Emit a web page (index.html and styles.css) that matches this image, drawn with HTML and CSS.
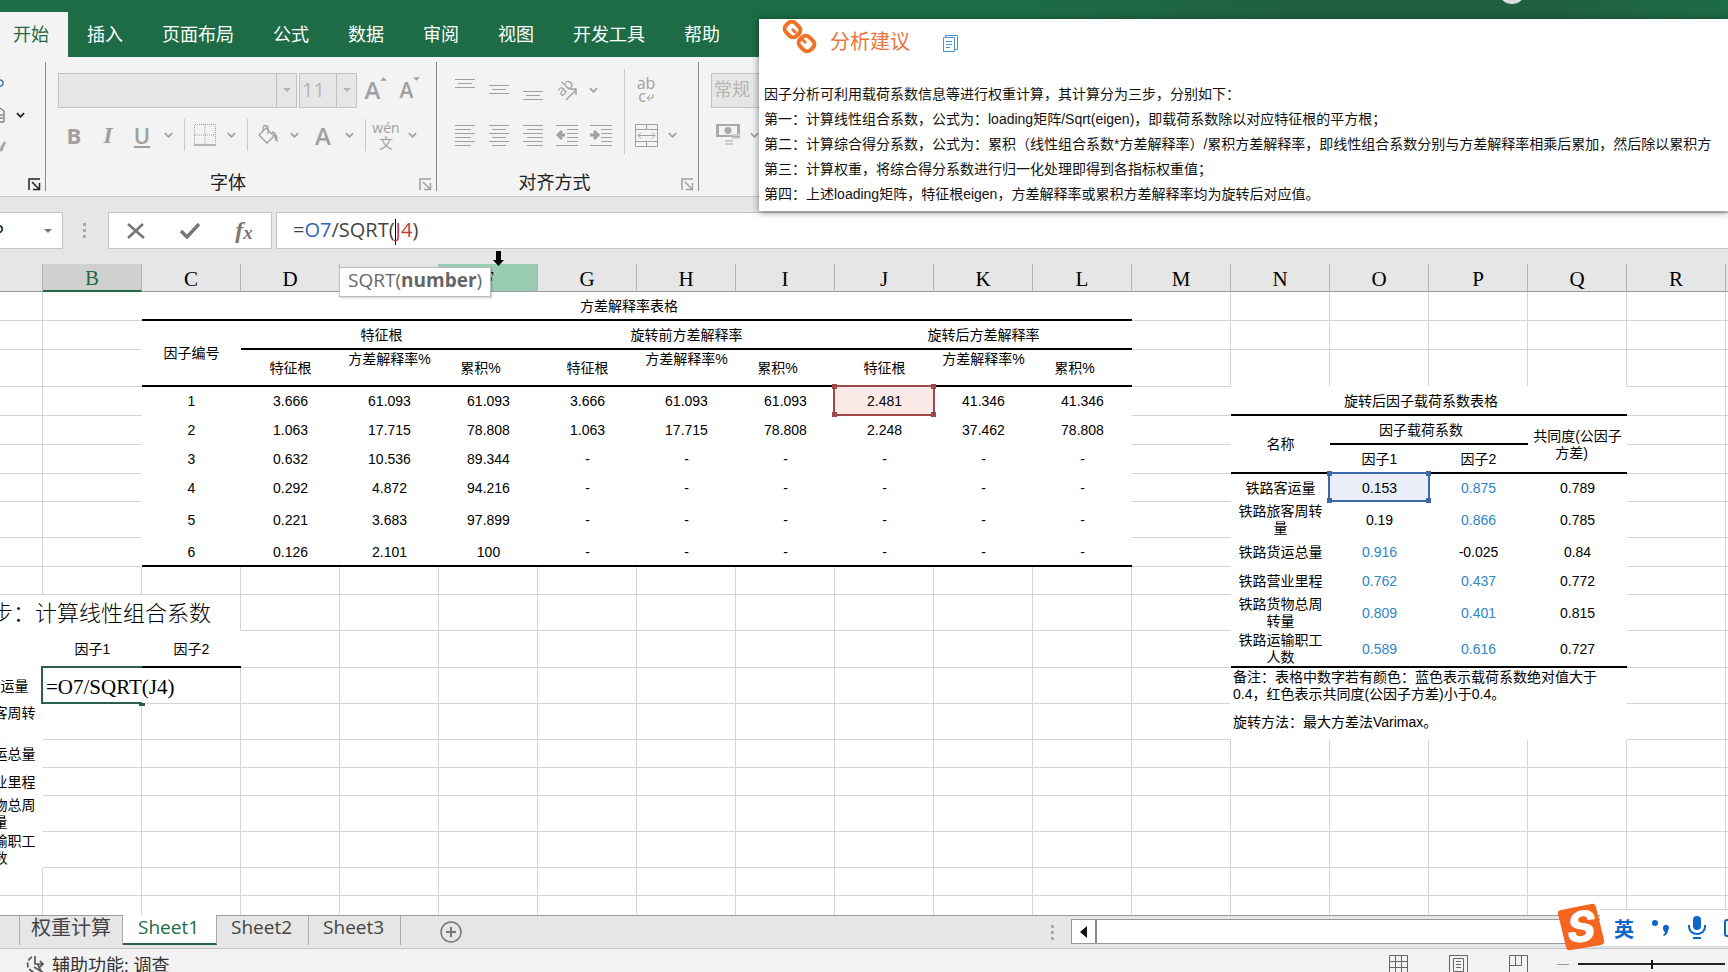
FILE: index.html
```html
<!DOCTYPE html>
<html lang="zh-CN">
<head>
  <meta charset="UTF-8" />
  <meta name="viewport" content="width=device-width, initial-scale=1.0" />
  <title>Sheet1</title>
  <link rel="stylesheet" href="styles.css">
</head>
<body>

  <svg class="defs" aria-hidden="true">
    <symbol id="chev" viewBox="0 0 10 6"><path d="M1 1l4 4 4-4" fill="none" stroke="currentColor" stroke-width="2"/></symbol>
    <symbol id="launch" viewBox="0 0 13 13"><path d="M1 12V1h11M4 4l7 7M11.500 5v6.500H5" fill="none" stroke="currentColor" stroke-width="1.500"/></symbol>
    <symbol id="down" viewBox="0 0 8 4"><path d="M0 0h8L4 4z" fill="currentColor"/></symbol>
  </svg>

  <header class="titlebar">
    <span class="avatar"></span>
    <nav class="tabs">
      <button class="active">开始</button>
      <button>插入</button>
      <button>页面布局</button>
      <button>公式</button>
      <button>数据</button>
      <button>审阅</button>
      <button>视图</button>
      <button>开发工具</button>
      <button>帮助</button>
    </nav>
  </header>

  <section class="ribbon">
    <div class="group clipboard">
      <div class="clip-icons">
        <svg width="6" height="12" viewBox="0 0 6 12"><circle cx="0" cy="6" r="3" fill="none" stroke="#4a78b0" stroke-width="1.500"/></svg>
        <div class="clip-row">
          <svg width="6" height="16" viewBox="0 0 6 16"><path d="M0 1l4 3v11H0M0 8h3M0 11h3" fill="none" stroke="#555"/></svg>
          <button class="chev dark" aria-label="复制选项"><svg width="9" height="6"><use href="#chev"/></svg></button>
        </div>
        <svg width="6" height="14" viewBox="0 0 6 14"><path d="M0 10l5-9M0 7l3 2" stroke="#aaa" stroke-width="3"/></svg>
      </div>
      <button class="launcher dark" aria-label="剪贴板设置"><svg width="13" height="13"><use href="#launch"/></svg></button>
    </div>

    <div class="group font">
      <div class="row top">
        <label class="combo font-name"><select disabled aria-label="字体名称"><option></option></select><span><svg width="8" height="4"><use href="#down"/></svg></span></label>
        <label class="combo font-size"><select disabled aria-label="字号"><option>11</option></select><span><svg width="8" height="4"><use href="#down"/></svg></span></label>
        <button class="tool grow" aria-label="增大字号">A<svg width="7" height="4" viewBox="0 0 8 4"><path d="M0 4h8L4 0z" fill="currentColor"/></svg></button>
        <button class="tool shrink" aria-label="减小字号">A<svg width="7" height="4" viewBox="0 0 8 4"><path d="M0 0h8L4 4z" fill="currentColor"/></svg></button>
      </div>
      <div class="row">
        <button class="tool bold">B</button>
        <button class="tool italic">I</button>
        <button class="tool under">U</button>
        <button class="chev" aria-label="下划线选项"><svg width="9" height="6"><use href="#chev"/></svg></button>
        <i class="sep"></i>
        <button class="tool" aria-label="边框"><svg width="22" height="22" viewBox="0 0 22 22" fill="none" stroke="currentColor"><path d="M.5 20V.5h21V20M11 1v19M1 11h20" stroke-dasharray="1 1"/><path d="M0 21h22" stroke-width="1.500"/></svg></button>
        <button class="chev" aria-label="边框选项"><svg width="9" height="6"><use href="#chev"/></svg></button>
        <i class="sep"></i>
        <button class="tool" aria-label="填充颜色"><svg width="20" height="20" viewBox="0 0 20 20" fill="none" stroke="currentColor" stroke-width="1.300"><path d="M8 3l8 8-7 7-8-8zM5 6V3a2 2 0 0 1 5 0v6"/><path d="M14 7c4 1 5 4 5 9-2-1-2-4-2-6" fill="currentColor"/></svg></button>
        <button class="chev" aria-label="填充选项"><svg width="9" height="6"><use href="#chev"/></svg></button>
        <button class="tool color">A</button>
        <button class="chev" aria-label="字体颜色选项"><svg width="9" height="6"><use href="#chev"/></svg></button>
        <i class="sep"></i>
        <button class="tool pinyin"><span>wén</span><span>文</span></button>
        <button class="chev" aria-label="拼音选项"><svg width="9" height="6"><use href="#chev"/></svg></button>
      </div>
      <p class="caption">字体</p>
      <button class="launcher" aria-label="字体设置"><svg width="13" height="13"><use href="#launch"/></svg></button>
    </div>

    <div class="group align">
      <div class="split">
        <div>
          <div class="row top">
            <button class="tool" aria-label="顶端对齐"><svg width="20" height="22" viewBox="0 0 20 22" stroke="currentColor"><path d="M0 .5h20M3 4.500h14M0 8.500h20"/></svg></button>
            <button class="tool" aria-label="垂直居中"><svg width="20" height="22" viewBox="0 0 20 22" stroke="currentColor"><path d="M0 6.500h20M3 10.500h14M0 14.500h20"/></svg></button>
            <button class="tool" aria-label="底端对齐"><svg width="20" height="22" viewBox="0 0 20 22" stroke="currentColor"><path d="M0 12.500h20M3 16.500h14M0 20.500h20"/></svg></button>
            <button class="tool orient" aria-label="方向"><svg width="22" height="22" viewBox="0 0 22 22"><text transform="translate(6 18) rotate(-45)" font-size="15" fill="currentColor">ab</text><path d="M10 21L20 11M14 10h6v6" fill="none" stroke="currentColor" stroke-width="1.500"/></svg></button>
            <button class="chev" aria-label="方向选项"><svg width="9" height="6"><use href="#chev"/></svg></button>
          </div>
          <div class="row">
            <button class="tool" aria-label="左对齐"><svg width="20" height="22" viewBox="0 0 20 22" stroke="currentColor"><path d="M0 1.500h20M0 5.500h16M0 9.500h20M0 13.500h16M0 17.500h20M0 21.500h16"/></svg></button>
            <button class="tool" aria-label="居中"><svg width="20" height="22" viewBox="0 0 20 22" stroke="currentColor"><path d="M0 1.500h20M3 5.500h14M0 9.500h20M3 13.500h14M0 17.500h20M3 21.500h14"/></svg></button>
            <button class="tool" aria-label="右对齐"><svg width="20" height="22" viewBox="0 0 20 22" stroke="currentColor"><path d="M0 1.500h20M4 5.500h16M0 9.500h20M4 13.500h16M0 17.500h20M4 21.500h16"/></svg></button>
            <button class="tool" aria-label="减少缩进"><svg width="22" height="22" viewBox="0 0 22 22" stroke="currentColor"><path d="M0 1.500h22M11 5.500h11M11 9.500h11M11 13.500h11M11 17.500h11M0 21.500h22"/><path d="M9 11H2M6 7l-4 4 4 4" fill="none" stroke-width="3"/></svg></button>
            <button class="tool" aria-label="增加缩进"><svg width="22" height="22" viewBox="0 0 22 22" stroke="currentColor"><path d="M0 1.500h22M11 5.500h11M11 9.500h11M11 13.500h11M11 17.500h11M0 21.500h22"/><path d="M0 11h7M4 7l4 4-4 4" fill="none" stroke-width="3"/></svg></button>
          </div>
        </div>
        <i class="sep tall"></i>
        <div>
          <div class="row top">
            <button class="tool wrap"><span>ab</span><span>c<svg width="8" height="8" viewBox="0 0 8 8"><path d="M7 0v4H1M4 1L1 4l3 3" fill="none" stroke="currentColor"/></svg></span></button>
          </div>
          <div class="row">
            <button class="tool" aria-label="合并后居中"><svg width="23" height="23" viewBox="0 0 23 23" fill="none" stroke="currentColor"><path d="M.5.5h22v22H.5zM.5 5.500h22M.5 17.500h22M11.500.5v5M11.500 17.500v5M3 11.500h17M6 8.500l-3 3 3 3M17 8.500l3 3-3 3"/></svg></button>
            <button class="chev" aria-label="合并选项"><svg width="9" height="6"><use href="#chev"/></svg></button>
          </div>
        </div>
      </div>
      <p class="caption">对齐方式</p>
      <button class="launcher" aria-label="对齐设置"><svg width="13" height="13"><use href="#launch"/></svg></button>
    </div>

    <div class="group number">
      <div class="row top">
        <label class="combo"><select disabled aria-label="数字格式"><option>常规</option></select></label>
      </div>
      <div class="row">
        <button class="tool" aria-label="会计数字格式"><svg width="24" height="24" viewBox="0 0 24 24"><path d="M0 1h24v13H0z" fill="#aaa"/><path d="M3 3h18v9H3z" fill="#f3f3f3"/><circle cx="12" cy="7.500" r="3.500" fill="#aaa"/><path d="M16 12h8M16 15h8M9 18h8M9 21h8" stroke="#ccc" stroke-width="2"/></svg></button>
        <button class="chev" aria-label="会计格式选项"><svg width="9" height="6"><use href="#chev"/></svg></button>
      </div>
    </div>
  </section>

  <section class="formula-bar">
    <div class="name-box">
      <input type="text" value="P" aria-label="名称框">
      <button aria-label="名称列表"><svg width="8" height="4"><use href="#down"/></svg></button>
    </div>
    <i class="dots"></i>
    <div class="fx-buttons">
      <button aria-label="取消"><svg width="18" height="16" viewBox="0 0 18 16"><path d="M1 1l16 14M16 1L1 15" stroke="#777" stroke-width="2.500"/></svg></button>
      <button aria-label="输入"><svg width="20" height="16" viewBox="0 0 20 16"><path d="M1 8l6 6L19 1" fill="none" stroke="#777" stroke-width="3.500"/></svg></button>
      <button class="fx"><em>f</em><em>x</em></button>
    </div>
    <div class="formula" contenteditable="true" role="textbox" aria-label="编辑栏">=<span class="blue">O7</span>/SQRT(<i class="caret"></i><span class="red">J4</span>)</div>
  </section>

  <main class="sheet">
    <table>
      <colgroup><col span="19"></colgroup>
      <thead>
        <tr>
          <th></th><th class="current">B</th><th>C</th><th>D</th><th>E</th><th class="hot">F</th><th>G</th><th>H</th><th>I</th><th>J</th><th>K</th><th>L</th><th>M</th><th>N</th><th>O</th><th>P</th><th>Q</th><th>R</th><th></th>
        </tr>
      </thead>
      <tbody>
        <tr class="h29">
          <td colspan="2" class="edge"></td>
          <td colspan="10" class="fill thick shift">方差解释率表格</td>
          <td colspan="7"></td>
        </tr>
        <tr class="h29">
          <td colspan="2" class="edge"></td>
          <td rowspan="2" class="fill thick">因子编号</td>
          <td colspan="3" class="fill thick shift">特征根</td>
          <td colspan="3" class="fill thick">旋转前方差解释率</td>
          <td colspan="3" class="fill thick">旋转后方差解释率</td>
          <td colspan="7"></td>
        </tr>
        <tr class="h37">
          <td colspan="2" class="edge"></td>
          <td class="fill thick">特征根</td><td class="fill thick up">方差解释率%</td><td class="fill thick shift">累积%</td>
          <td class="fill thick">特征根</td><td class="fill thick up">方差解释率%</td><td class="fill thick shift">累积%</td>
          <td class="fill thick">特征根</td><td class="fill thick up">方差解释率%</td><td class="fill thick shift">累积%</td>
          <td></td><td colspan="4" class="open"></td><td colspan="2"></td>
        </tr>
        <tr class="h29">
          <td colspan="2" class="edge"></td>
          <td class="fill">1</td>
          <td class="fill">3.666</td><td class="fill">61.093</td><td class="fill">61.093</td>
          <td class="fill">3.666</td><td class="fill">61.093</td><td class="fill">61.093</td>
          <td class="fill ref red-ref">2.481<span class="frame"></span></td><td class="fill">41.346</td><td class="fill">41.346</td>
          <td class="edge"></td>
          <td colspan="4" class="fill thick shift">旋转后因子载荷系数表格</td>
          <td colspan="2"></td>
        </tr>
        <tr class="h29">
          <td colspan="2" class="edge"></td>
          <td class="fill">2</td>
          <td class="fill">1.063</td><td class="fill">17.715</td><td class="fill">78.808</td>
          <td class="fill">1.063</td><td class="fill">17.715</td><td class="fill">78.808</td>
          <td class="fill">2.248</td><td class="fill">37.462</td><td class="fill">78.808</td>
          <td class="edge"></td>
          <td rowspan="2" class="fill thick">名称</td>
          <td colspan="2" class="fill thick shift">因子载荷系数</td>
          <td rowspan="2" class="fill thick">共同度(公因子<br>方差)&nbsp;&nbsp;&nbsp;</td>
          <td colspan="2"></td>
        </tr>
        <tr class="h29">
          <td colspan="2" class="edge"></td>
          <td class="fill">3</td>
          <td class="fill">0.632</td><td class="fill">10.536</td><td class="fill">89.344</td>
          <td class="fill">-</td><td class="fill">-</td><td class="fill">-</td>
          <td class="fill">-</td><td class="fill">-</td><td class="fill">-</td>
          <td class="edge"></td>
          <td class="fill thick">因子1</td><td class="fill thick">因子2</td>
          <td colspan="2"></td>
        </tr>
        <tr class="h28">
          <td colspan="2" class="edge"></td>
          <td class="fill">4</td>
          <td class="fill">0.292</td><td class="fill">4.872</td><td class="fill">94.216</td>
          <td class="fill">-</td><td class="fill">-</td><td class="fill">-</td>
          <td class="fill">-</td><td class="fill">-</td><td class="fill">-</td>
          <td class="edge"></td>
          <td class="fill">铁路客运量</td>
          <td class="fill ref blue-ref">0.153<span class="frame"></span></td><td class="fill hi">0.875</td><td class="fill">0.789</td>
          <td colspan="2"></td>
        </tr>
        <tr class="h36">
          <td colspan="2" class="edge"></td>
          <td class="fill">5</td>
          <td class="fill">0.221</td><td class="fill">3.683</td><td class="fill">97.899</td>
          <td class="fill">-</td><td class="fill">-</td><td class="fill">-</td>
          <td class="fill">-</td><td class="fill">-</td><td class="fill">-</td>
          <td class="edge"></td>
          <td class="fill">铁路旅客周转量</td>
          <td class="fill">0.19</td><td class="fill hi">0.866</td><td class="fill">0.785</td>
          <td colspan="2"></td>
        </tr>
        <tr class="h29">
          <td colspan="2" class="edge"></td>
          <td class="fill thick">6</td>
          <td class="fill thick">0.126</td><td class="fill thick">2.101</td><td class="fill thick">100</td>
          <td class="fill thick">-</td><td class="fill thick">-</td><td class="fill thick">-</td>
          <td class="fill thick">-</td><td class="fill thick">-</td><td class="fill thick">-</td>
          <td class="edge"></td>
          <td class="fill">铁路货运总量</td>
          <td class="fill hi">0.916</td><td class="fill">-0.025</td><td class="fill">0.84</td>
          <td colspan="2"></td>
        </tr>
        <tr class="h28">
          <td colspan="12"></td>
          <td class="edge"></td>
          <td class="fill">铁路营业里程</td>
          <td class="fill hi">0.762</td><td class="fill hi">0.437</td><td class="fill">0.772</td>
          <td colspan="2"></td>
        </tr>
        <tr class="h36">
          <td colspan="3" class="fill step">第一步：计算线性组合系数</td>
          <td colspan="9"></td>
          <td class="edge"></td>
          <td class="fill">铁路货物总周转量</td>
          <td class="fill hi">0.809</td><td class="fill hi">0.401</td><td class="fill">0.815</td>
          <td colspan="2"></td>
        </tr>
        <tr class="h37">
          <td class="fill"></td>
          <td class="fill thick">因子1</td><td class="fill thick">因子2</td>
          <td colspan="9"></td>
          <td class="edge"></td>
          <td class="fill thick">铁路运输职工人数</td>
          <td class="fill thick hi">0.589</td><td class="fill thick hi">0.616</td><td class="fill thick">0.727</td>
          <td colspan="2"></td>
        </tr>
        <tr class="h36">
          <td class="fill">铁路客运量</td>
          <td class="editing"><input type="text" value="=O7/SQRT(J4)" aria-label="B13"></td>
          <td></td>
          <td colspan="9"></td>
          <td class="edge"></td>
          <td colspan="4" class="fill note">备注：表格中数字若有颜色：蓝色表示载荷系数绝对值大于0.4，红色表示共同度(公因子方差)小于0.4。</td>
          <td colspan="2"></td>
        </tr>
        <tr class="h36">
          <td class="fill">铁路旅客周转量</td>
          <td colspan="11"></td>
          <td class="edge"></td>
          <td colspan="4" class="fill note">旋转方法：最大方差法Varimax。</td>
          <td colspan="2"></td>
        </tr>
        <tr class="h28"><td class="fill">铁路货运总量</td><td colspan="18"></td></tr>
        <tr class="h28"><td class="fill">铁路营业里程</td><td colspan="18"></td></tr>
        <tr class="h36"><td class="fill">铁路货物总周转量</td><td colspan="18"></td></tr>
        <tr class="h36"><td class="fill">铁路运输职工人数</td><td colspan="18"></td></tr>
        <tr class="h28"><td colspan="19"></td></tr>
        <tr class="h28"><td colspan="19"></td></tr>
      </tbody>
    </table>
  </main>

  <footer>
    <div class="sheet-bar">
      <nav class="sheet-tabs">
        <button>权重计算</button>
        <button class="active">Sheet1</button>
        <button>Sheet2</button>
        <button>Sheet3</button>
      </nav>
      <button class="add" aria-label="新工作表"><svg width="22" height="22" viewBox="0 0 22 22" fill="none" stroke="#777"><circle cx="11" cy="11" r="10" stroke-width="1.500"/><path d="M6 11h10M11 6v10" stroke-width="2"/></svg></button>
      <i class="dots"></i>
      <div class="scroll">
        <button aria-label="向左滚动"><svg width="7" height="12" viewBox="0 0 7 12"><path d="M7 0v12L0 6z" fill="#111"/></svg></button>
      </div>
    </div>
    <div class="status">
      <button class="access">
        <svg width="20" height="20" viewBox="0 0 20 20" fill="none" stroke="#555" stroke-width="1.700"><path d="M6 2a8 8 0 0 0 2 15" stroke-dasharray="5 2"/><path d="M9 1v8h8M14 6l3 3-3 3M8 12l10 6M12 10l4 8"/></svg>
        辅助功能: 调查
      </button>
      <div class="views">
        <button aria-label="普通"><svg width="19" height="19" viewBox="0 0 19 19" fill="none" stroke="#666"><path d="M.5.5h18v18H.5zM6.500.5v18M12.500.5v18M.5 6.500h18M.5 12.500h18"/></svg></button>
        <button aria-label="页面布局"><svg width="19" height="19" viewBox="0 0 19 19" fill="none" stroke="#666"><path d="M.5.5h18v18H.5zM4.500 3.500h10v13h-10zM7 6.500h5M7 9.500h5M7 12.500h5"/></svg></button>
        <button aria-label="分页预览"><svg width="19" height="19" viewBox="0 0 19 19" fill="none" stroke="#666"><path d="M.5.5h18v18H.5zM6.500.5v10M12.500.5v10M.5 10.500h12"/></svg></button>
        <button class="minus" aria-label="缩小"></button>
        <input type="range" min="0" max="100" value="50" aria-label="缩放">
      </div>
    </div>
  </footer>

  <div class="fn-tip">SQRT(<b>number</b>)</div>

  <svg class="pointer" width="11" height="15" viewBox="0 0 11 15"><path d="M3 0h5v9h3l-5.500 6L0 9h3z"/></svg>

  <aside class="advice">
    <h2>
      <svg width="35" height="35" viewBox="0 0 35 35" fill="none" stroke="#f07025" stroke-width="4"><rect x="3" y="4" width="15" height="13" rx="5" transform="rotate(45 10.500 10.500)"/><rect x="17" y="18" width="15" height="13" rx="5" transform="rotate(45 24.500 24.500)"/><path d="M10 10l4 4M20 20l4 4" stroke-width="3"/></svg>
      分析建议
      <svg class="copy" width="15" height="17" viewBox="0 0 15 17" fill="none" stroke="#4a92dc"><path d="M.5 2.500h11v14H.5zM2.500 2.500v-2h12v14h-3M3 6.500h6M3 9.500h6M3 12.500h4"/></svg>
    </h2>
    <p>因子分析可利用载荷系数信息等进行权重计算，其计算分为三步，分别如下：</p>
    <p>第一：计算线性组合系数，公式为：loading矩阵/Sqrt(eigen)，即载荷系数除以对应特征根的平方根；</p>
    <p>第二：计算综合得分系数，公式为：累积（线性组合系数*方差解释率）/累积方差解释率，即线性组合系数分别与方差解释率相乘后累加，然后除以累积方</p>
    <p>第三：计算权重，将综合得分系数进行归一化处理即得到各指标权重值；</p>
    <p>第四：上述loading矩阵，特征根eigen，方差解释率或累积方差解释率均为旋转后对应值。</p>
  </aside>

  <div class="ime">
    <svg class="logo" width="48" height="48" viewBox="0 0 48 48"><path d="M1 11Q0 8 4 7L34 1q4-1 5 3l8 33q1 4-3 5L14 47q-4 1-5-3z" fill="#f4651f"/><text x="24" y="39" text-anchor="middle" transform="rotate(-4 24 24)" font-family="Inter" font-size="43" font-weight="800" font-style="italic" fill="#fff">S</text></svg>
    <button>英</button>
    <button aria-label="标点"><svg width="18" height="18" viewBox="0 0 18 18" fill="#0b66c8"><circle cx="3" cy="4" r="3"/><path d="M11 9a3 3 0 1 1 5 2q0 4-4 6l-1-1q2-1 2-3-2-1-2-4z"/></svg></button>
    <button aria-label="语音"><svg width="18" height="24" viewBox="0 0 18 24"><rect x="5" y="0" width="8" height="14" rx="4" fill="#0b66c8"/><path d="M1 9v2a8 7 0 0 0 16 0V9M5 22h8" fill="none" stroke="#0b66c8" stroke-width="2"/></svg></button>
    <button aria-label="键盘"><svg width="22" height="18" viewBox="0 0 22 18" fill="none" stroke="#0b66c8" stroke-width="2"><rect x="1" y="1" width="20" height="16" rx="2"/><path d="M4 5h14M4 9h14M4 13h14"/></svg></button>
  </div>

</body>
</html>
```
FILE: styles.css
```css
* {
  box-sizing: border-box;
}

body {
  margin: 0;
  height: 100vh;
  display: flex;
  flex-direction: column;
  overflow: hidden;
  position: relative;
  background: #e6e6e6;
  color: #111;
  font-family: "Open Sans", "Noto Sans CJK SC", sans-serif;
  font-size: 18px;
}

button, input, select {
  font: inherit;
  color: inherit;
  border: 0;
  padding: 0;
  background: none;
}

button {
  display: flex;
  align-items: center;
  justify-content: center;
}

p {
  margin: 0;
}

.defs {
  display: none;
}

/* title bar and tabs */

.titlebar {
  flex: none;
  height: 57px;
  padding-top: 12px;
  position: relative;
  overflow: hidden;
  background: linear-gradient(to right, #1d6c46 60%, #1f5f42 75%, #1f5f42 90%, #1d6c46);
}

.avatar {
  position: absolute;
  top: -24px;
  left: 87%;
  width: 28px;
  height: 28px;
  margin-left: -5px;
  border-radius: 50%;
  background: #ddd;
}

.tabs {
  display: flex;
  height: 100%;
  color: #fff;
}

.tabs button {
  padding: 0 20px 4px 19px;
}

.tabs .active {
  padding-left: 13px;
  padding-right: 19px;
  background: #f3f3f3;
  color: #1e6b45;
}

/* ribbon */

.ribbon {
  flex: none;
  display: flex;
  height: 140px;
  padding-top: 5px;
  background: #f3f3f3;
  border-bottom: 1px solid #c8c8c8;
}

.group {
  position: relative;
  height: 129px;
  padding: 7px 0 0 11px;
  border-right: 1px solid #8a8a8a;
  color: #a0a0a0;
}

.clipboard {
  width: 46px;
  padding-left: 0;
}

.clip-icons {
  display: flex;
  flex-direction: column;
  gap: 12px;
  padding-top: 8px;
}

.clip-row {
  display: flex;
  align-items: center;
  gap: 5px;
}

.clip-row .chev {
  height: 28px;
}

.font {
  width: 391px;
}

.align {
  width: 262px;
}

.number {
  flex: 1;
  border-right: 0;
  padding-left: 12px;
}

.row {
  display: flex;
  align-items: center;
  height: 38px;
  margin-top: 8px;
}

.row.top {
  height: 36px;
  margin-top: 3px;
}

.tool {
  width: 34px;
  height: 34px;
  flex: none;
}

.chev {
  width: 18px;
  height: 30px;
  flex: none;
}

.dark {
  color: #222;
}

.sep {
  width: 1px;
  height: 32px;
  margin: 0 3px 0 7px;
  background: #c9c9c9;
}

.sep.tall {
  height: 85px;
  margin: 0 4px 0 6px;
}

.split {
  display: flex;
}

.caption {
  position: absolute;
  left: 0;
  right: 26px;
  bottom: -4px;
  text-align: center;
  color: #222;
  line-height: 26px;
}

.launcher {
  position: absolute;
  right: 4px;
  bottom: 0;
}

.combo {
  display: flex;
  height: 35px;
  border: 1px solid #c2c2c2;
  background: #e6e6e6;
  color: #b5b5b5;
}

.combo select {
  flex: 1;
  min-width: 0;
  padding-left: 2px;
  padding-bottom: 2px;
  appearance: none;
  opacity: 1;
}

.combo span {
  display: flex;
  align-items: center;
  justify-content: center;
  width: 20px;
  border-left: 1px solid #c2c2c2;
}

.font-name {
  width: 239px;
  margin: 0 2px 0 1px;
}

.font-size {
  width: 58px;
  margin-right: 2px;
  font-size: 20px;
}

.number .combo {
  width: 120px;
}

.orient svg {
  overflow: visible;
}

.grow, .shrink {
  align-items: flex-start;
  font-size: 24px;
  font-weight: 600;
  line-height: 34px;
}

.grow svg, .shrink svg {
  margin-top: 4px;
}

.shrink {
  font-size: 21px;
}

.bold {
  font-size: 22px;
  font-weight: 700;
}

.italic {
  font-family: "Liberation Serif", serif;
  font-size: 24px;
  font-style: italic;
  font-weight: 700;
}

.under {
  font-size: 22px;
  font-weight: 600;
  text-decoration: underline;
}

.color {
  font-size: 24px;
  font-weight: 600;
  margin-left: 3px;
}

.pinyin, .wrap {
  flex-direction: column;
  font-size: 14px;
  line-height: 15px;
}

.wrap {
  font-size: 16px;
  line-height: 13px;
}

/* formula bar */

.formula-bar {
  flex: none;
  display: flex;
  height: 67px;
  padding: 15px 0;
}

.name-box, .fx-buttons, .formula {
  border: 1px solid #c4c4c4;
  background: #fff;
}

.name-box {
  display: flex;
  width: 63px;
  border-left: 0;
}

.name-box input {
  width: 34px;
  text-indent: -7px;
}

.name-box button {
  width: 28px;
  color: #777;
}

.dots {
  width: 3px;
  height: 16px;
  background: repeating-linear-gradient(#aaa 0 3px, transparent 3px 6px);
}

.formula-bar .dots {
  margin: 11px 22px 0 20px;
}

.fx-buttons {
  display: flex;
  width: 164px;
  margin-right: 4px;
}

.fx-buttons button {
  flex: 1;
}

.fx {
  font-family: "Liberation Serif", serif;
  font-size: 24px;
  font-weight: 700;
  color: #777;
}

.fx em + em {
  font-size: 19px;
  padding-top: 5px;
}

.formula {
  flex: 1;
  padding-left: 16px;
  border-right: 0;
  font-size: 20px;
  line-height: 34px;
  color: #444;
  outline: 0;
}

.caret {
  display: inline-block;
  width: 1px;
  height: 26px;
  vertical-align: middle;
  background: #000;
}

.blue {
  color: #2f66b5;
}

.red {
  color: #b84040;
}

/* worksheet */

.sheet {
  flex: 1;
  min-height: 0;
  overflow: hidden;
  background: #fff;
}

/* column A is scrolled partly out of view */
table {
  width: 1881px;
  margin-left: -56px;
  table-layout: fixed;
  border-spacing: 0;
  background: repeating-linear-gradient(to right, #fff 0 98px, #d4d4d4 98px 99px);
  font-family: "Liberation Sans", "Noto Sans CJK SC", sans-serif;
  font-size: 14px;
  line-height: 17px;
  color: #000;
}

col {
  width: 99px;
}

th {
  height: 28px;
  padding: 3px 0 0;
  background: #e6e6e6;
  border-right: 1px solid #b4b4b4;
  border-bottom: 1px solid #9a9a9a;
  font-family: "Liberation Serif", serif;
  font-size: 21px;
  font-weight: 400;
  line-height: 24px;
}

th.current {
  padding-top: 2px;
  background: #d0d0d0;
  border-bottom: 2px solid #1e6b45;
  color: #1e6b45;
}

th.hot {
  background: #9accb4;
}

td {
  padding: 1px 4px 0;
  border-bottom: 1px solid #d4d4d4;
  text-align: center;
}

.h28 { height: 28px; }
.h29 { height: 29px; }
.h36 { height: 36px; }
.h37 { height: 37px; }

.edge {
  border-right: 1px solid #fff;
}

.open {
  border-bottom-color: #fff;
}

.fill {
  background: #fff;
  border-bottom-color: #fff;
}

.thick {
  border-bottom: 2px solid #000;
}

.shift {
  padding-right: 20px;
}

.up {
  vertical-align: top;
}

.hi {
  color: #2e86c8;
}

.step {
  padding: 2px 0 0 3px;
  border-right: 1px solid #d4d4d4;
  font-size: 22px;
  font-weight: 300;
  line-height: 30px;
  text-align: left;
  white-space: nowrap;
}

.note {
  padding: 1px 24px 0 2px;
  text-align: left;
}

.ref {
  position: relative;
}

/* coloured box with four corner handles */
.frame {
  position: absolute;
  inset: -3px -2px -2px -3px;
  background:
    linear-gradient(currentColor, currentColor) 0 0 / 5px 5px,
    linear-gradient(currentColor, currentColor) 100% 0 / 5px 5px,
    linear-gradient(currentColor, currentColor) 0 100% / 5px 5px,
    linear-gradient(currentColor, currentColor) 100% 100% / 5px 5px;
  background-repeat: no-repeat;
}

.frame::before {
  content: "";
  position: absolute;
  inset: 1px;
  border: 2px solid currentColor;
}

.red-ref {
  background: #fbe9e8;
}

.red-ref .frame {
  color: #a04848;
}

.blue-ref {
  background: #e9eef8;
}

.blue-ref .frame {
  color: #3c68a8;
}

.editing {
  position: relative;
}

.editing::before {
  content: "";
  position: absolute;
  inset: -2px 0 -1px -2px;
  border: 2px solid #2b6149;
  border-right: 0;
}

.editing::after {
  content: "";
  position: absolute;
  right: -3px;
  bottom: -3px;
  width: 6px;
  height: 3px;
  background: #2b6149;
}

.editing input {
  position: absolute;
  top: 0;
  left: 0;
  width: 150px;
  height: 34px;
  padding: 4px 0 0 3px;
  background: #fff;
  font-family: "Liberation Serif", serif;
  font-size: 21px;
}

/* sheet tabs and status bar */

.sheet-bar {
  display: flex;
  height: 34px;
  border-top: 1px solid #999;
  border-bottom: 1px solid #c4c4c4;
  background: #e6e6e6;
}

.sheet-tabs {
  display: flex;
  align-items: flex-start;
  margin-top: -1px;
  padding-left: 19px;
  font-size: 19px;
  line-height: 24px;
  color: #444;
}

.sheet-tabs button {
  height: 29px;
  margin-top: 1px;
  padding: 0 16px 7px 14px;
  border-right: 1px solid #aaa;
}

.sheet-tabs button:first-child {
  padding: 0 11px 6px;
  border-left: 1px solid #aaa;
  font-size: 20px;
}

.sheet-tabs .active {
  height: 30px;
  margin-top: 0;
  padding: 0 17px 4px 15px;
  background: #fff;
  border-bottom: 2px solid #2b6149;
  color: #1e6b45;
}

.add {
  margin-left: 39px;
}

.sheet-bar .dots {
  margin: 9px 17px 0 auto;
}

.scroll {
  width: 38%;
  height: 25px;
  margin-top: 3px;
  border: 1px solid #999;
  border-right: 0;
  background: #fff;
}

.scroll button {
  width: 25px;
  height: 100%;
  border-right: 2px solid #888;
}

.status {
  display: flex;
  align-items: flex-start;
  justify-content: space-between;
  height: 23px;
  overflow: hidden;
  background: #f2f2f2;
}

.access {
  gap: 6px;
  padding: 4px 0 0 26px;
  line-height: 24px;
  color: #333;
}

.views {
  display: flex;
  padding: 5px 3px 0 0;
}

.views button {
  margin-right: 41px;
}

.views .minus {
  width: 12px;
  height: 1px;
  margin: 10px 9px 0 -12px;
  background: #999;
}

.views input {
  width: 147px;
  height: 20px;
  margin: 0;
  appearance: none;
  background: linear-gradient(#222, #222) center / 100% 2px no-repeat;
}

.views input::-webkit-slider-thumb {
  appearance: none;
  width: 2px;
  height: 9px;
  background: #111;
}

/* floating pieces */

.fn-tip {
  position: absolute;
  top: 267px;
  left: 339px;
  height: 30px;
  padding: 0 8px;
  border: 1px solid #bbb;
  background: #fff;
  box-shadow: 1px 1px 2px rgba(0,0,0,0.2);
  color: #666;
  font-size: 19px;
  line-height: 24px;
}

.pointer {
  position: absolute;
  top: 251px;
  left: 493px;
}

.advice {
  position: absolute;
  top: 19px;
  left: 759px;
  right: 0;
  height: 192px;
  padding-left: 5px;
  overflow: hidden;
  background: #fff;
  box-shadow: 0 1px 7px rgba(0,0,0,0.5);
  font-family: "Liberation Sans", "Noto Sans CJK SC", sans-serif;
  font-size: 14px;
  line-height: 25px;
  white-space: nowrap;
}

.advice h2 {
  display: flex;
  align-items: flex-start;
  gap: 13px;
  height: 63px;
  margin: 0;
  padding-left: 18px;
  font-size: 20px;
  font-weight: 400;
  line-height: 46px;
  color: #e8743c;
}

.advice h2 svg {
  flex: none;
}

.advice .copy {
  margin: 16px 0 0 20px;
}

.ime {
  position: absolute;
  right: 0;
  bottom: 25px;
  display: flex;
  align-items: center;
  width: 128px;
  height: 38px;
  padding-left: 14px;
  gap: 18px;
  background: #fff;
  border-top: 1px solid #cfd8e0;
  border-bottom: 1px solid #cfd8e0;
  color: #0b66c8;
  font-size: 20px;
  font-weight: 700;
}

.ime .logo {
  position: absolute;
  left: -43px;
  top: -7px;
}

.ime button {
  flex: none;
}
```
